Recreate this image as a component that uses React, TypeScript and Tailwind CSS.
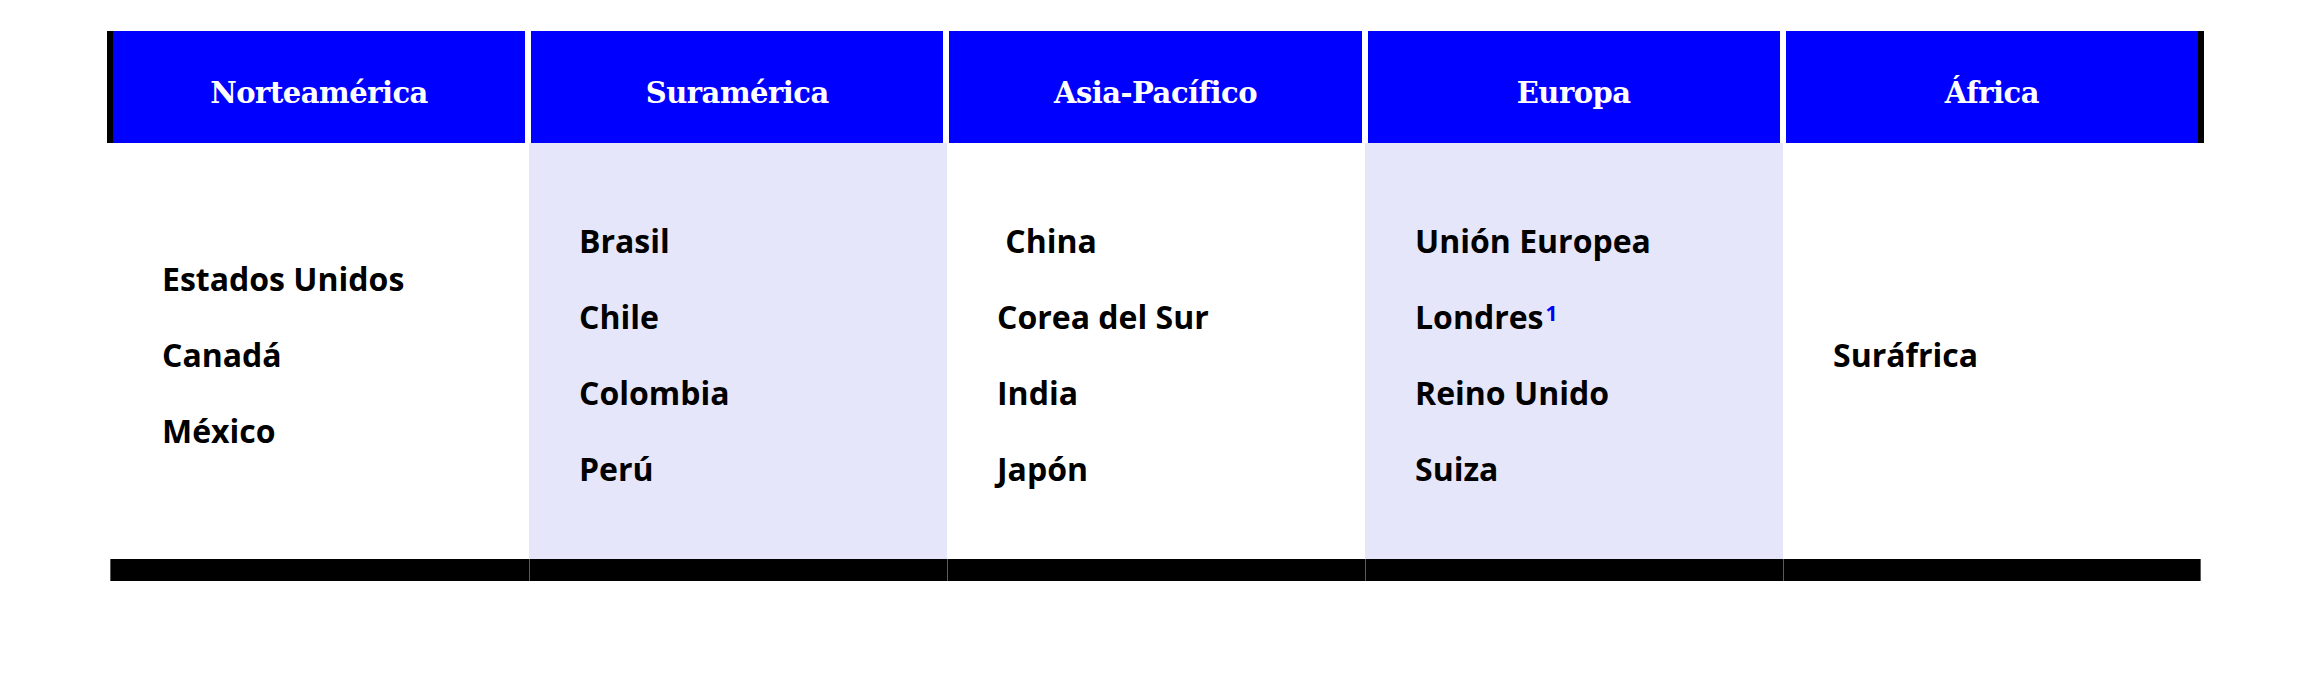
import React from "react";

type Region = {
  name: string;
  items: string[];
  shaded: boolean;
};

const regions: Region[] = [
  { name: "Norteamérica", items: ["Estados Unidos", "Canadá", "México"], shaded: false },
  { name: "Suramérica", items: ["Brasil", "Chile", "Colombia", "Perú"], shaded: true },
  { name: "Asia-Pacífico", items: ["\u00a0China", "Corea del Sur", "India", "Japón"], shaded: false },
  { name: "Europa", items: ["Unión Europea", "Londres", "Reino Unido", "Suiza"], shaded: true },
  { name: "África", items: ["Suráfrica"], shaded: false },
];

const App = () => {
  return (
    <div className="min-h-screen bg-white pt-[31px] pl-[107px]">
      <div className="w-[2097px]">
        {/* header row */}
        <div className="grid grid-cols-5 gap-[6px] bg-white border-x-[6px] border-black h-[112px]">
          {regions.map((r) => (
            <div
              key={r.name}
              className="bg-[#0000ff] flex items-center justify-center pt-[13px] text-white font-bold text-[29px] font-['DejaVu_Serif',serif] tracking-[-0.5px]"
            >
              {r.name}
            </div>
          ))}
        </div>

        {/* body */}
        <div className="grid grid-cols-[422px_418px_418px_418px_421px] h-[416px]">
          {regions.map((r, i) => (
            <div
              key={r.name}
              className={`flex flex-col justify-center pt-[8px] ${i === 0 ? "pl-[55px]" : "pl-[50px]"} ${
                r.shaded ? "bg-[#e6e6fa]" : "bg-white"
              }`}
            >
              {r.items.map((item) => (
                <div
                  key={item}
                  className="leading-[76px] text-[32px] font-bold text-black font-['Open_Sans',sans-serif] whitespace-pre"
                >
                  {item}
                  {item === "Londres" && (
                    <span className="relative -top-[8px] ml-[2px] text-[21px] leading-none font-bold text-[#0000ff]">1</span>
                  )}
                </div>
              ))}
            </div>
          ))}
        </div>

        {/* footer bar */}
        <div className="grid grid-cols-[419px_418px_418px_418px_418px] ml-[3px] h-[22px]">
          {regions.map((r, i) => (
            <div
              key={r.name}
              className={`bg-black border-l border-[#5a5a5a] ${i === 4 ? "border-r" : ""}`}
            />
          ))}
        </div>
      </div>
    </div>
  );
};

export default App;
